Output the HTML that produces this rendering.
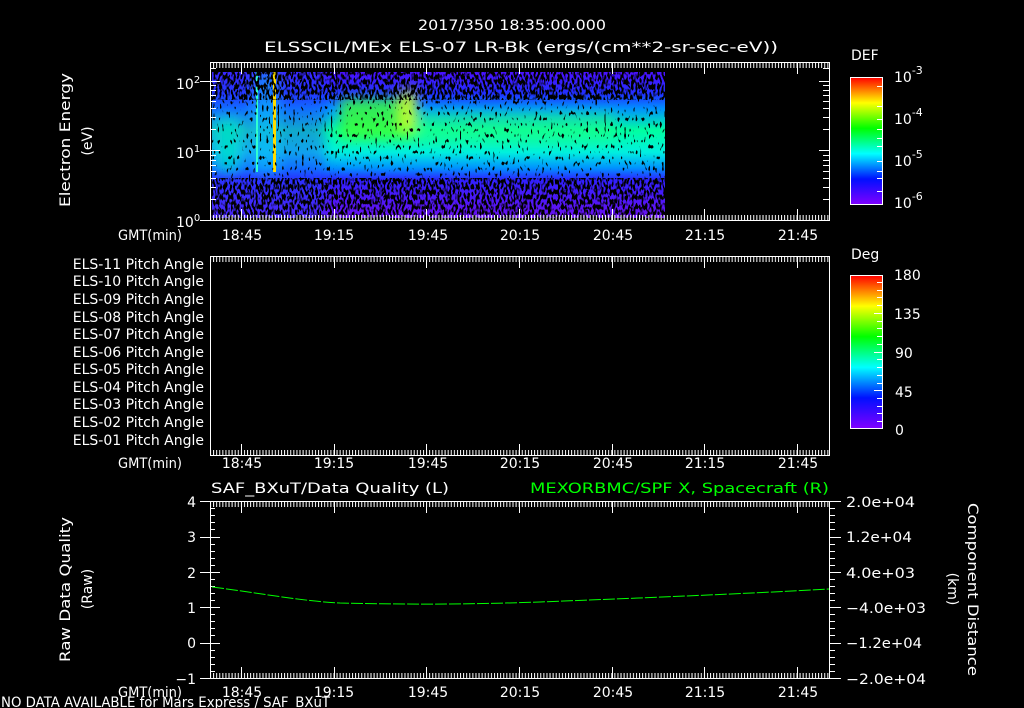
<!DOCTYPE html>
<html><head><meta charset="utf-8"><style>
html,body{margin:0;padding:0;background:#000;}
svg{display:block}
text{font-family:"DejaVu Sans","Liberation Sans",sans-serif;fill:#fff;font-size:14px}
</style></head><body>
<svg width="1024" height="708" viewBox="0 0 1024 708" xmlns="http://www.w3.org/2000/svg">
<defs>
<pattern id="tt" x="210" y="0" width="3.0867" height="10" patternUnits="userSpaceOnUse"><rect x="0" y="0" width="1" height="10" fill="#fff"/></pattern>
<linearGradient id="cbar" x1="0" y1="1" x2="0" y2="0">
<stop offset="0" stop-color="#8000ff"/><stop offset="0.2" stop-color="#0010ff"/><stop offset="0.4" stop-color="#00ffff"/><stop offset="0.6" stop-color="#00ff00"/><stop offset="0.8" stop-color="#ffff00"/><stop offset="1" stop-color="#ff0000"/>
</linearGradient>
<linearGradient id="spec" x1="0" y1="72" x2="0" y2="218" gradientUnits="userSpaceOnUse">
<stop offset="0" stop-color="#4a10ff"/><stop offset="0.15" stop-color="#2030ff"/><stop offset="0.25" stop-color="#0090ff"/><stop offset="0.4" stop-color="#00ffa0"/><stop offset="0.55" stop-color="#00f0e0"/><stop offset="0.66" stop-color="#0090ff"/><stop offset="0.74" stop-color="#3020ff"/><stop offset="1" stop-color="#6a10f0"/>
</linearGradient>
<filter id="bl" x="-0.2" y="-0.2" width="1.4" height="1.4"><feGaussianBlur stdDeviation="6"/></filter>
<filter id="nz" x="0" y="0" width="1" height="1" filterUnits="objectBoundingBox">
<feTurbulence type="fractalNoise" baseFrequency="0.5 0.2" numOctaves="1" seed="7"/>
<feColorMatrix type="matrix" values="0 0 0 0 0 0 0 0 0 0 0 0 0 0 0 -12 0 0 0 6.3"/>
</filter>
<filter id="nz2" x="0" y="0" width="1" height="1" filterUnits="objectBoundingBox">
<feTurbulence type="fractalNoise" baseFrequency="0.45 0.18" numOctaves="1" seed="11"/>
<feColorMatrix type="matrix" values="0 0 0 0 0 0 0 0 0 0 0 0 0 0 0 -14 0 0 0 5.2"/>
</filter>
<clipPath id="sc"><rect x="212" y="72" width="453" height="146"/></clipPath>
</defs>

<text x="418" y="30" font-size="16" textLength="188" lengthAdjust="spacingAndGlyphs">2017/350 18:35:00.000</text>
<text x="264" y="52" font-size="16" textLength="514" lengthAdjust="spacingAndGlyphs">ELSSCIL/MEx ELS-07 LR-Bk  (ergs/(cm**2-sr-sec-eV))</text>

<!-- spectrogram -->
<g clip-path="url(#sc)">
<rect x="212" y="72" width="453" height="146" fill="url(#spec)"/>
<g filter="url(#bl)">
<rect x="340" y="98" width="75" height="42" fill="#40ff30" opacity="0.8"/>
<rect x="400" y="90" width="16" height="40" fill="#e0ff20" opacity="0.8"/>
<rect x="415" y="112" width="200" height="32" fill="#20ff80" opacity="0.45"/>
<rect x="200" y="60" width="125" height="170" fill="#2040ff" opacity="0.45"/>
<rect x="218" y="120" width="20" height="50" fill="#00ffc0" opacity="0.6"/>
<rect x="255" y="72" width="22" height="100" fill="#00d0ff" opacity="0.5"/>
</g>
<rect x="273" y="72" width="3" height="100" fill="#ffdd00"/>
<rect x="256" y="72" width="2" height="100" fill="#30ffd0"/>
<rect x="212" y="72" width="453" height="146" filter="url(#nz2)"/>
<rect x="212" y="72" width="453" height="28" filter="url(#nz)"/>
<rect x="212" y="178" width="453" height="40" filter="url(#nz)"/>
</g>

<!-- panel 1 frame -->
<rect x="210.5" y="62.5" width="619" height="158" fill="none" stroke="#fff"/>
<rect x="210" y="63" width="619" height="5" fill="url(#tt)"/>
<rect x="210" y="215" width="619" height="5" fill="url(#tt)"/>
<g stroke="#fff">
<path d="M241.5 63v11M334.5 63v11M426.5 63v11M519.5 63v11M612.5 63v11M704.5 63v11M797.5 63v11"/>
<path d="M241.5 220v-11M334.5 220v-11M426.5 220v-11M519.5 220v-11M612.5 220v-11M704.5 220v-11M797.5 220v-11"/>
<path d="M200 220.5h20M200 150.5h20M200 81.5h20M210 199.5h6M210 187.5h6M210 178.5h6M210 171.5h6M210 165.5h6M210 160.5h6M210 155.5h6M210 129.5h6M210 117.5h6M210 108.5h6M210 101.5h6M210 95.5h6M210 90.5h6M210 85.5h6M210 68.5h6"/>
<path d="M829 81.5h-10M829 150.5h-10M829 129.5h-6M829 117.5h-6M829 108.5h-6M829 101.5h-6M829 95.5h-6M829 90.5h-6M829 85.5h-6M829 199.5h-6M829 187.5h-6M829 178.5h-6M829 171.5h-6M829 165.5h-6M829 160.5h-6M829 155.5h-6M829 68.5h-6"/>
</g>
<text x="176" y="89" font-size="14">10<tspan dy="-6" font-size="10">2</tspan></text>
<text x="176" y="158" font-size="14">10<tspan dy="-6" font-size="10">1</tspan></text>
<text x="176" y="227" font-size="14">10<tspan dy="-6" font-size="10">0</tspan></text>
<text transform="translate(70,207) rotate(-90)" font-size="15" textLength="134" lengthAdjust="spacingAndGlyphs">Electron Energy</text>
<text transform="translate(92,141) rotate(-90)" text-anchor="middle" font-size="15">(eV)</text>
<g font-size="14">
<text x="118" y="240" textLength="64" lengthAdjust="spacingAndGlyphs">GMT(min)</text>
<text x="242" y="240" text-anchor="middle">18:45</text><text x="334" y="240" text-anchor="middle">19:15</text><text x="428" y="240" text-anchor="middle">19:45</text><text x="520" y="240" text-anchor="middle">20:15</text><text x="613" y="240" text-anchor="middle">20:45</text><text x="705" y="240" text-anchor="middle">21:15</text><text x="798" y="240" text-anchor="middle">21:45</text>
</g>
<!-- DEF bar -->
<text x="851" y="60" font-size="16">DEF</text>
<rect x="850.5" y="77.5" width="32" height="127" fill="url(#cbar)" stroke="#fff"/>
<g stroke="#fff"><path d="M882 86.5h-5M882 106.5h-5M882 119.5h-5M882 129.5h-5M882 138.5h-5M882 146.5h-5M882 161.5h-5M882 171.5h-5M882 178.5h-5M882 191.5h-5"/></g>
<text x="894" y="82" font-size="16">10<tspan dy="-8" font-size="11">-3</tspan></text>
<text x="894" y="124" font-size="16">10<tspan dy="-8" font-size="11">-4</tspan></text>
<text x="894" y="166" font-size="16">10<tspan dy="-8" font-size="11">-5</tspan></text>
<text x="894" y="208" font-size="16">10<tspan dy="-8" font-size="11">-6</tspan></text>

<!-- panel 2 -->
<rect x="210.5" y="256.5" width="619" height="199" fill="none" stroke="#fff"/>
<rect x="210" y="257" width="619" height="5" fill="url(#tt)"/>
<rect x="210" y="450" width="619" height="5" fill="url(#tt)"/>
<g stroke="#fff">
<path d="M241.5 257v11M334.5 257v11M426.5 257v11M519.5 257v11M612.5 257v11M704.5 257v11M797.5 257v11"/>
<path d="M241.5 455v-11M334.5 455v-11M426.5 455v-11M519.5 455v-11M612.5 455v-11M704.5 455v-11M797.5 455v-11"/>
</g>
<g font-size="13" text-anchor="end">
<text x="204" y="269">ELS-11 Pitch Angle</text><text x="204" y="286">ELS-10 Pitch Angle</text><text x="204" y="304">ELS-09 Pitch Angle</text><text x="204" y="322">ELS-08 Pitch Angle</text><text x="204" y="339">ELS-07 Pitch Angle</text><text x="204" y="357">ELS-06 Pitch Angle</text><text x="204" y="374">ELS-05 Pitch Angle</text><text x="204" y="392">ELS-04 Pitch Angle</text><text x="204" y="409">ELS-03 Pitch Angle</text><text x="204" y="427">ELS-02 Pitch Angle</text><text x="204" y="445">ELS-01 Pitch Angle</text>
</g>
<g font-size="14">
<text x="118" y="468" textLength="64" lengthAdjust="spacingAndGlyphs">GMT(min)</text>
<text x="242" y="468" text-anchor="middle">18:45</text><text x="334" y="468" text-anchor="middle">19:15</text><text x="428" y="468" text-anchor="middle">19:45</text><text x="520" y="468" text-anchor="middle">20:15</text><text x="613" y="468" text-anchor="middle">20:45</text><text x="705" y="468" text-anchor="middle">21:15</text><text x="798" y="468" text-anchor="middle">21:45</text>
</g>
<text x="851" y="259" font-size="16">Deg</text>
<rect x="850.5" y="275.5" width="32" height="153" fill="url(#cbar)" stroke="#fff"/>
<g stroke="#fff"><path d="M882 282.5h-5M882 290.5h-5M882 297.5h-5M882 305.5h-5M882 313.5h-8M882 321.5h-5M882 328.5h-5M882 336.5h-5M882 344.5h-5M882 352.5h-8M882 359.5h-5M882 367.5h-5M882 375.5h-5M882 383.5h-5M882 390.5h-8M882 398.5h-5M882 406.5h-5M882 413.5h-5M882 421.5h-5"/></g>
<g font-size="16"><text x="894" y="280">180</text><text x="894" y="319">135</text><text x="895" y="358">90</text><text x="895" y="397">45</text><text x="895" y="435">0</text></g>

<!-- panel 3 -->
<text x="211" y="493" font-size="16" textLength="238" lengthAdjust="spacingAndGlyphs">SAF_BXuT/Data Quality (L)</text>
<text x="530" y="493" font-size="16" textLength="299" lengthAdjust="spacingAndGlyphs" style="fill:#00ff00">MEXORBMC/SPF X, Spacecraft (R)</text>
<rect x="210.5" y="501.5" width="619" height="177" fill="none" stroke="#fff"/>
<rect x="210" y="502" width="619" height="5" fill="url(#tt)"/>
<rect x="210" y="673" width="619" height="5" fill="url(#tt)"/>
<g stroke="#fff">
<path d="M241.5 502v11M334.5 502v11M426.5 502v11M519.5 502v11M612.5 502v11M704.5 502v11M797.5 502v11"/>
<path d="M241.5 678v-11M334.5 678v-11M426.5 678v-11M519.5 678v-11M612.5 678v-11M704.5 678v-11M797.5 678v-11"/>
<path d="M200 501.5h20M200 537.5h20M200 572.5h20M200 607.5h20M200 643.5h20M200 678.5h20"/>
<path d="M210 508.5h5M210 515.5h5M210 522.5h5M210 529.5h5M210 544.5h5M210 551.5h5M210 558.5h5M210 565.5h5M210 579.5h5M210 586.5h5M210 593.5h5M210 600.5h5M210 614.5h5M210 621.5h5M210 628.5h5M210 635.5h5M210 650.5h5M210 657.5h5M210 664.5h5M210 671.5h5"/>
<path d="M829 501.5h12M829 537.5h12M829 572.5h12M829 607.5h12M829 643.5h12M829 678.5h12"/>
<path d="M829 508.5h6M829 515.5h6M829 522.5h6M829 529.5h6M829 544.5h6M829 551.5h6M829 558.5h6M829 565.5h6M829 579.5h6M829 586.5h6M829 593.5h6M829 600.5h6M829 614.5h6M829 621.5h6M829 628.5h6M829 635.5h6M829 650.5h6M829 657.5h6M829 664.5h6M829 671.5h6"/>
</g>
<path d="M212 587 C260 593 300 601 340 603 C420 605 480 604 540 602 C640 598 740 594 829 589" fill="none" stroke="#00ff00" stroke-width="1" stroke-dasharray="12 2"/>
<g font-size="15" text-anchor="end"><text x="196" y="507">4</text><text x="196" y="542">3</text><text x="196" y="578">2</text><text x="196" y="613">1</text><text x="196" y="648">0</text><text x="196" y="684">−1</text></g>
<g font-size="14"><text x="846" y="507" textLength="69" lengthAdjust="spacingAndGlyphs">2.0e+04</text><text x="846" y="542" textLength="66" lengthAdjust="spacingAndGlyphs">1.2e+04</text><text x="846" y="578" textLength="69" lengthAdjust="spacingAndGlyphs">4.0e+03</text><text x="846" y="613" textLength="80" lengthAdjust="spacingAndGlyphs">−4.0e+03</text><text x="846" y="648" textLength="76" lengthAdjust="spacingAndGlyphs">−1.2e+04</text><text x="846" y="684" textLength="80" lengthAdjust="spacingAndGlyphs">−2.0e+04</text></g>
<text transform="translate(70,662) rotate(-90)" font-size="15" textLength="145" lengthAdjust="spacingAndGlyphs">Raw Data Quality</text>
<text transform="translate(92,589) rotate(-90)" text-anchor="middle" font-size="15">(Raw)</text>
<text transform="translate(968,503) rotate(90)" font-size="15" textLength="173" lengthAdjust="spacingAndGlyphs">Component Distance</text>
<text transform="translate(948,589) rotate(90)" text-anchor="middle" font-size="15">(km)</text>
<g font-size="14">
<text x="118" y="697" textLength="64" lengthAdjust="spacingAndGlyphs">GMT(min)</text>
<text x="242" y="697" text-anchor="middle">18:45</text><text x="334" y="697" text-anchor="middle">19:15</text><text x="428" y="697" text-anchor="middle">19:45</text><text x="520" y="697" text-anchor="middle">20:15</text><text x="613" y="697" text-anchor="middle">20:45</text><text x="705" y="697" text-anchor="middle">21:15</text><text x="798" y="697" text-anchor="middle">21:45</text>
</g>
<text x="1" y="707" font-size="13" textLength="329" lengthAdjust="spacingAndGlyphs">NO DATA AVAILABLE for Mars Express / SAF_BXuT</text>
</svg>
</body></html>
